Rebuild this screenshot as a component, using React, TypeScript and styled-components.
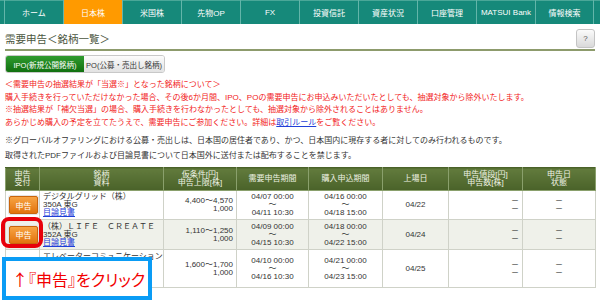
import React from "react";
import styled, { createGlobalStyle } from "styled-components";

const GlobalStyle = createGlobalStyle`
  body {
    margin: 0;
    font-family: "Liberation Sans", "Noto Sans CJK JP", sans-serif;
    color: #333;
  }
`;

const navItems = [
  { label: "ホーム" },
  { label: "日本株", active: true },
  { label: "米国株" },
  { label: "先物OP" },
  { label: "FX" },
  { label: "投資信託" },
  { label: "資産状況" },
  { label: "口座管理" },
  { label: "MATSUI Bank" },
  { label: "情報検索" },
];

const colWidths = [34, 124, 73, 72, 74, 66, 74, 73];

const rows = [
  {
    name: ["デジタルグリッド（株）"],
    code: "350A 東G",
    price: "4,400～4,570",
    max: "1,000",
    demand: ["04/07 00:00", "04/11 10:30"],
    buy: ["04/16 00:00", "04/18 15:00"],
    listed: "04/22",
    h: 29,
  },
  {
    name: ["（株）ＬＩＦＥ　ＣＲＥＡＴＥ"],
    code: "352A 東G",
    price: "1,110～1,250",
    max: "1,000",
    demand: ["04/09 00:00", "04/15 10:30"],
    buy: ["04/18 00:00", "04/22 15:00"],
    listed: "04/24",
    h: 30,
  },
  {
    name: ["エレベーターコミュニケーション", "ズ（株）"],
    code: "353A 東G",
    price: "1,600～1,700",
    max: "1,000",
    demand: ["04/10 00:00", "04/16 10:30"],
    buy: ["04/21 00:00", "04/23 15:00"],
    listed: "04/25",
    h: 38,
  },
];

const Page = styled.div`
  position: relative;
  width: 600px;
  height: 308px;
  overflow: hidden;
  background: #fff;
`;

const Nav = styled.ul`
  display: flex;
  margin: 0;
  padding: 0 0 0 4px;
  list-style: none;
  height: 24px;
  background: #16897a;
  box-shadow: inset 0 1px 0 #4aa798;
`;

const NavItem = styled.li<{ $active?: boolean }>`
  flex: 0 0 59px;
  display: flex;
  align-items: center;
  justify-content: center;
  border-left: 1px solid #63b5a9;
  background: ${(p) => (p.$active ? "#ff9a00" : "transparent")};
  color: #fff;
  font-size: 8px;
  box-sizing: border-box;
  &:last-child {
    border-right: 1px solid #63b5a9;
  }
`;

const Content = styled.div`
  padding: 0 5px;
`;

const TitleBar = styled.div`
  display: flex;
  justify-content: space-between;
  align-items: center;
  height: 25px;
  border-bottom: 2px solid #8d9b6c;
`;

const Title = styled.h1`
  margin: 3px 0 0;
  font-size: 10.5px;
  font-weight: normal;
  color: #4b5640;
`;

const HelpButton = styled.button`
  width: 19px;
  height: 19px;
  margin: 4px 0 0;
  padding: 0;
  border: 1px solid #c4c4c4;
  border-radius: 3px;
  background: linear-gradient(#fbfbfb, #d9d9d9);
  color: #555;
  font-size: 8px;
  font-family: inherit;
`;

const Tabs = styled.div`
  display: inline-flex;
  margin-top: 4px;
  height: 18px;
  border: 1px solid #c8c8c8;
  border-radius: 3px;
  overflow: hidden;
  box-sizing: border-box;
`;

const Tab = styled.div<{ $active?: boolean }>`
  display: flex;
  align-items: center;
  justify-content: center;
  width: ${(p) => (p.$active ? "78px" : "80px")};
  font-size: 7.5px;
  color: ${(p) => (p.$active ? "#fff" : "#333")};
  background: ${(p) =>
    p.$active ? "linear-gradient(#2f9b2f, #11700f)" : "linear-gradient(#fcfcfc, #e2e2e2)"};
`;

const Notes = styled.div<{ $red?: boolean }>`
  margin-top: ${(p) => (p.$red ? "6px" : "5px")};
  font-size: 8px;
  line-height: ${(p) => (p.$red ? "12.5px" : "14.5px")};
  color: ${(p) => (p.$red ? "#f21b1b" : "#333")};
  white-space: nowrap;
`;

const Link = styled.a`
  color: #1f3fd8;
  text-decoration: underline;
`;

const Table = styled.table`
  margin-top: 4px;
  width: 590px;
  border-collapse: collapse;
  table-layout: fixed;
  font-size: 8px;
  line-height: 8px;
`;

const Col = styled.col<{ $w: number }>`
  width: ${(p) => p.$w}px;
`;

const Th = styled.th`
  height: 22px;
  padding: 0;
  font-weight: normal;
  color: #eef2e4;
  background: linear-gradient(#627b3d, #4a6229);
  border: 1px solid #8aa06c;
  border-top-color: #4a6229;
  text-align: center;
  vertical-align: middle;
`;

const Row = styled.tr<{ $alt?: boolean; $h: number }>`
  height: ${(p) => p.$h}px;
  background: ${(p) => (p.$alt ? "#eff1ea" : "#fff")};
`;

const Cell = styled.td<{ $align?: string }>`
  padding: 1px 3px;
  border: 1px solid #cfd2c8;
  text-align: ${(p) => p.$align || "center"};
  vertical-align: middle;
  white-space: nowrap;
  overflow: visible;
  color: #333;
`;

const ApplyButton = styled.button`
  display: block;
  width: 29px;
  height: 18px;
  margin: 0 auto;
  padding: 0;
  border: 1px solid #c9650c;
  border-radius: 2px;
  background: linear-gradient(#f7a443, #e2730d);
  box-shadow: 0 0 0 1px #e4e4e4;
  color: #fff;
  font-size: 8px;
  font-family: inherit;
`;

const Highlight = styled.div`
  position: absolute;
  left: 1px;
  top: 217px;
  width: 42px;
  height: 31px;
  border: 4px solid #e8000b;
  border-radius: 8px;
  box-sizing: border-box;
`;

const Callout = styled.div`
  position: absolute;
  left: 2px;
  top: 257px;
  width: 150px;
  height: 43px;
  display: flex;
  align-items: center;
  padding-left: 6px;
  border: 4px solid #0a9cf5;
  background: #fff;
  box-sizing: border-box;
  color: #f20000;
  font-family: "Noto Sans CJK JP", sans-serif;
  font-size: 16px;
  font-feature-settings: "palt";
`;

function Lines({ items }: { items: string[] }) {
  return (
    <>
      {items.map((t, i) => (
        <div key={i}>{t}</div>
      ))}
    </>
  );
}

export default function App() {
  return (
    <>
      <GlobalStyle />
      <Page>
        <Nav>
          {navItems.map((item) => (
            <NavItem key={item.label} $active={item.active}>
              {item.label}
            </NavItem>
          ))}
        </Nav>
        <Content>
          <TitleBar>
            <Title>需要申告＜銘柄一覧＞</Title>
            <HelpButton>?</HelpButton>
          </TitleBar>
          <Tabs>
            <Tab $active>IPO(新規公開銘柄)</Tab>
            <Tab>PO(公募・売出し銘柄)</Tab>
          </Tabs>
          <Notes $red>
            <div>＜需要申告の抽選結果が「当選※」となった銘柄について＞</div>
            <div>購入手続きを行っていただけなかった場合、その後6か月間、IPO、POの需要申告にお申込みいただいたとしても、抽選対象から除外いたします。</div>
            <div>※抽選結果が「補欠当選」の場合、購入手続きを行わなかったとしても、抽選対象から除外されることはありません。</div>
            <div>
              あらかじめ購入の予定を立てたうえで、需要申告にご参加ください。詳細は<Link>取引ルール</Link>をご覧ください。
            </div>
          </Notes>
          <Notes>
            <div>※グローバルオファリングにおける公募・売出しは、日本国の居住者であり、かつ、日本国内に現存する者に対してのみ行われるものです。</div>
            <div>取得されたPDFファイルおよび目論見書について日本国外に送付または配布することを禁じます。</div>
          </Notes>
          <Table>
            <colgroup>
              {colWidths.map((w, i) => (
                <Col key={i} $w={w} />
              ))}
            </colgroup>
            <thead>
              <tr>
                <Th>申告<br />受付</Th>
                <Th>銘柄<br />資料</Th>
                <Th>仮条件[円]<br />申告上限[株]</Th>
                <Th>需要申告期間</Th>
                <Th>購入申込期間</Th>
                <Th>上場日</Th>
                <Th>申告値段[円]<br />申告数[株]</Th>
                <Th>申告日<br />状態</Th>
              </tr>
            </thead>
            <tbody>
              {rows.map((r, i) => (
                <Row key={i} $alt={i % 2 === 1} $h={r.h}>
                  <Cell>
                    <ApplyButton>申告</ApplyButton>
                  </Cell>
                  <Cell $align="left">
                    <Lines items={r.name} />
                    <div>{r.code}</div>
                    <Link>目論見書</Link>
                  </Cell>
                  <Cell $align="right">
                    <Lines items={[r.price, r.max]} />
                  </Cell>
                  <Cell>
                    <Lines items={[r.demand[0], "～", r.demand[1]]} />
                  </Cell>
                  <Cell>
                    <Lines items={[r.buy[0], "～", r.buy[1]]} />
                  </Cell>
                  <Cell>{r.listed}</Cell>
                  <Cell $align="right">
                    <Lines items={["－", "－"]} />
                  </Cell>
                  <Cell>
                    <Lines items={["－", "－"]} />
                  </Cell>
                </Row>
              ))}
            </tbody>
          </Table>
        </Content>
        <Highlight />
        <Callout>↑『申告』をクリック</Callout>
      </Page>
    </>
  );
}
